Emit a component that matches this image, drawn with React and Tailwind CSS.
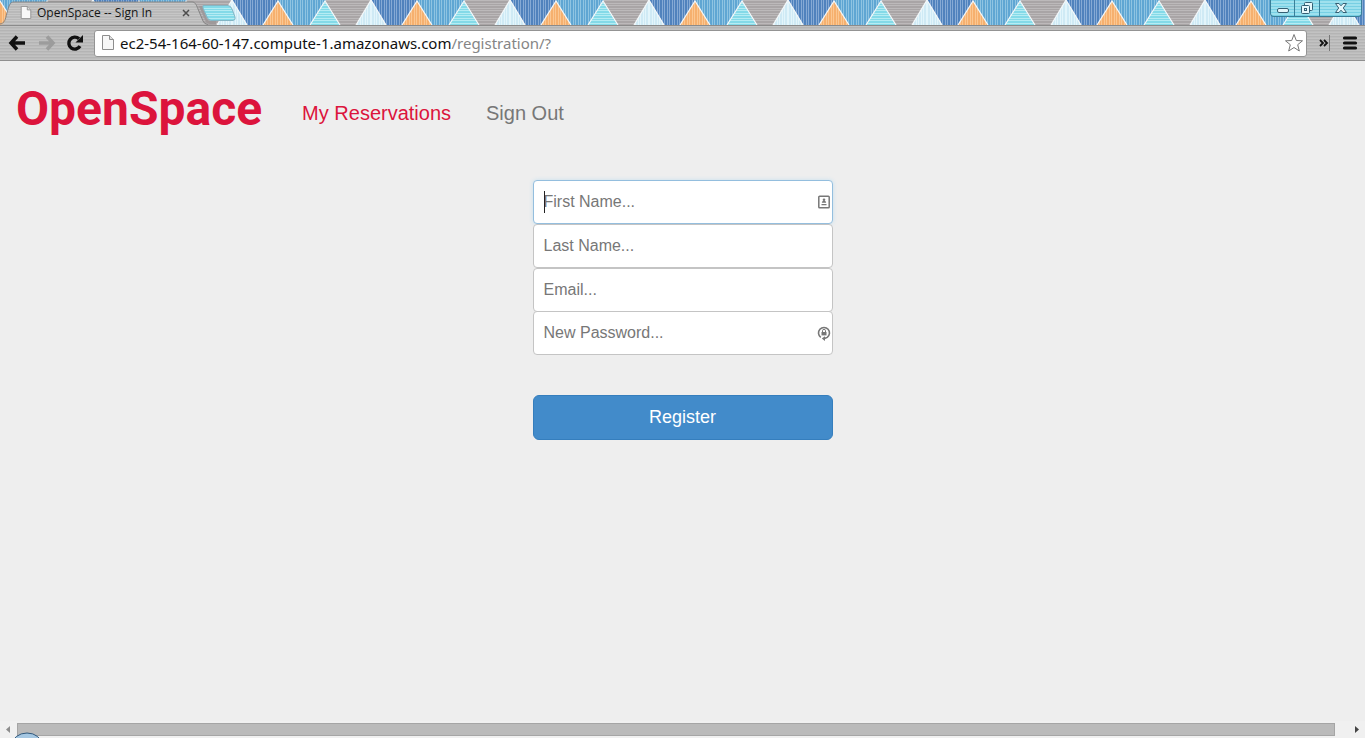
import React from "react";

const metal =
  "bg-[repeating-linear-gradient(to_bottom,#c2c2c2_0px,#c2c2c2_1px,#b4b4b4_1px,#b4b4b4_2px,#bcbcbc_2px,#bcbcbc_3px)]";

function Stripes({ id, base, line, horizontal }) {
  return (
    <pattern id={id} width="5" height="5" patternUnits="userSpaceOnUse">
      <rect width="5" height="5" fill={base} />
      {horizontal ? (
        <path d="M0 .5h5M0 3.5h5" stroke={line} />
      ) : (
        <path d="M.5 0v5M3.5 0v5" stroke={line} strokeWidth=".8" />
      )}
    </pattern>
  );
}

function Bunting() {
  return (
    <svg className="absolute inset-0 h-full w-full" aria-hidden="true">
      <defs>
        <Stripes id="s-navy" base="#5082bd" line="#94b4da" />
        <Stripes id="s-blue" base="#5fa6d3" line="#9ccbe6" />
        <Stripes id="s-orange" base="#f6b06e" line="#fccd9c" />
        <Stripes id="s-cyan" base="#84dae8" line="#b5ecf3" horizontal />
        <Stripes id="s-pale" base="#cfeaf5" line="#e9f7fc" />
        <Stripes id="s-grey" base="#a9a5a6" line="#bcb9ba" horizontal />
        <pattern id="flags" x="93" width="139" height="25" patternUnits="userSpaceOnUse">
          <rect width="139" height="25" fill="url(#s-grey)" />
          <path d="M0 0H47L32 25H15z" fill="url(#s-navy)" />
          <path d="M46 0H94L78 25H61z" fill="url(#s-blue)" />
          <path d="M46 1L31 25H61z" fill="url(#s-orange)" />
          <path d="M93 1L78 25H108z" fill="url(#s-cyan)" />
          <path d="M0 0L15 25H0zM139 0L124 25H139z" fill="url(#s-pale)" />
          <path
            d="M0 0L15 25M31 25L46 1L61 25M78 25L93 1L108 25M124 25L139 0"
            fill="none"
            stroke="#f4f8fa"
            strokeWidth="1.200"
          />
        </pattern>
      </defs>
      <rect width="100%" height="25" fill="url(#flags)" />
    </svg>
  );
}

function PageIcon({ className }) {
  return (
    <svg className={className} viewBox="0 0 12 15" aria-hidden="true">
      <path d="M.5.5h7l4 4v10H.5z" fill="#f7f7f7" stroke="#8d8d8d" />
      <path d="M7.5.5v4h4" fill="#ddd" stroke="#8d8d8d" />
    </svg>
  );
}

function TabStrip() {
  return (
    <div className="relative flex h-[25px] items-start justify-between">
      <Bunting />
      <div className="relative flex h-full items-center">
        <svg className="absolute inset-0 h-full w-[240px]" viewBox="0 0 240 25" aria-hidden="true">
          <defs>
            <Stripes id="s-tab" base="#b9b9b9" line="#c6c6c6" horizontal />
          </defs>
          <path d="M0 25C5 24 5 21 7 14C9 6 10 2 14 2H192C195 2 196 4 198 9L203 21Q204 24 208 25z" fill="url(#s-tab)" />
          <path d="M0 24C5 23 5 20 7 13C9 5 10 2 14 2H192C195 2 196 4 198 9L203 21Q204 24 208 24.500" fill="none" stroke="#858585" />
          <path d="M199 6L206 22Q207 24 210 24H216V21H211Q208 21 207 19L202 6z" fill="#9e999a" />
          <path d="M203 5.500H228Q231 6 232 9L235 17Q236 20 233 20.500H211Q208 20 207 17L203 8z" fill="url(#s-cyan)" stroke="#83b6c5" />
        </svg>
        <div className="relative flex w-[200px] items-center pr-2 pl-5">
          <PageIcon className="h-[13px] w-3" />
          <span className="ml-[5px] flex-1 font-['Open_Sans',sans-serif] text-[12px] leading-4 whitespace-nowrap text-[#151515]">
            OpenSpace -- Sign In
          </span>
          <button aria-label="Close tab" className="grid h-3 w-3 place-items-center">
            <svg className="h-2 w-2" viewBox="0 0 8 8" aria-hidden="true">
              <path d="M1 1l6 6M7 1L1 7" stroke="#4d4d4d" strokeWidth="1.500" />
            </svg>
          </button>
        </div>
      </div>
      <div className="relative mr-[3px] flex h-[17px] divide-x divide-[#397f99] rounded-b border border-t-0 border-[#397f99] bg-[repeating-linear-gradient(to_bottom,#77cfe3_0px,#77cfe3_1px,#9ee1ee_1px,#9ee1ee_3px)]">
        <button aria-label="Minimize" className="grid w-6 place-items-center">
          <svg className="h-4 w-4" viewBox="0 0 16 16" aria-hidden="true">
            <rect x="2.500" y="8.500" width="11" height="4" rx="1.500" fill="#e5f7fb" stroke="#345f73" />
          </svg>
        </button>
        <button aria-label="Restore" className="grid w-[25px] place-items-center">
          <svg className="h-4 w-4" viewBox="0 0 16 16" aria-hidden="true">
            <g fill="#e5f7fb" stroke="#345f73">
              <rect x="5.500" y="2.500" width="8" height="8" rx="1" />
              <rect x="2.500" y="5.500" width="8" height="8" rx="1" />
              <rect x="5.500" y="8.500" width="2" height="2" />
            </g>
          </svg>
        </button>
        <button aria-label="Close window" className="grid w-[41px] place-items-center">
          <svg className="h-4 w-4" viewBox="0 0 16 16" aria-hidden="true">
            <path
              d="M2.500 3.500h3.500L8 5.800L10 3.500h3.500L10.300 8l3.200 4.500H10L8 10.200L6 12.500H2.500L5.700 8z"
              fill="#e5f7fb"
              stroke="#345f73"
            />
          </svg>
        </button>
      </div>
    </div>
  );
}

function Toolbar() {
  return (
    <div className={`flex h-9 items-center border-t border-b border-t-[#8b8b8b] border-b-[#8f8f8f] pr-[7px] pl-2 ${metal}`}>
      <button aria-label="Back" className="h-5 w-5">
        <svg viewBox="0 0 20 20" aria-hidden="true">
          <path d="M9 3.500L3 10l6 6.500M3.500 10H17" fill="none" stroke="#111" strokeWidth="3.500" />
        </svg>
      </button>
      <button aria-label="Forward" className="ml-2 h-5 w-5">
        <svg viewBox="0 0 20 20" aria-hidden="true">
          <path d="M11 3.500L17 10l-6 6.500M16.500 10H3" fill="none" stroke="#9c9c9c" strokeWidth="3.500" />
        </svg>
      </button>
      <button aria-label="Reload" className="ml-2 h-5 w-5">
        <svg viewBox="0 0 20 20" aria-hidden="true">
          <path d="M16 13.200A6 6 0 1 1 15 5.800" fill="none" stroke="#111" strokeWidth="3.400" />
          <path d="M19 2V9.500H11.500z" fill="#111" />
        </svg>
      </button>
      <form className="ml-[10px] flex h-[27px] flex-1 items-center rounded-[3px] border border-[#949494] bg-white px-[7px] pb-px">
        <PageIcon className="h-[15px] w-3" />
        <label htmlFor="address" className="sr-only">Address</label>
        <div className="relative ml-[6px] h-6 flex-1 font-['Noto_Sans',sans-serif] text-[15px] leading-6">
          <input id="address" className="h-6 w-full bg-transparent text-transparent outline-none" />
          <span className="pointer-events-none absolute inset-0 flex whitespace-nowrap">
            <span className="text-[#111]">ec2-54-164-60-147.compute-1.amazonaws.com</span>
            <span className="text-[#858585]">/registration/?</span>
          </span>
        </div>
        <button type="button" aria-label="Bookmark this page" className="-mr-[5px] h-5 w-5">
          <svg viewBox="0 0 20 20" aria-hidden="true">
            <path
              d="M10 1.500L12.300 7.500L18.500 7.800L13.700 11.700L15.300 18L10 14.500L4.700 18L6.300 11.700L1.500 7.800L7.700 7.500z"
              fill="#fff"
              stroke="#777"
              strokeLinejoin="round"
            />
          </svg>
        </button>
      </form>
      <button aria-label="More extensions" className="ml-3 h-4 w-[10px]">
        <svg viewBox="0 0 10 16" aria-hidden="true">
          <path d="M1 5l3 3-3 3M5 5l3 3-3 3" fill="none" stroke="#111" strokeWidth="1.800" />
        </svg>
      </button>
      <span className="h-4 w-px bg-[#777]" />
      <button aria-label="Menu" className="ml-3 h-4 w-4">
        <svg viewBox="0 0 16 16" aria-hidden="true">
          <path d="M2.500 3h11M2.500 8h11M2.500 13h11" stroke="#111" strokeWidth="3.200" strokeLinecap="round" />
        </svg>
      </button>
    </div>
  );
}

function ContactIcon() {
  return (
    <svg className="h-[14px] w-[14px]" viewBox="0 0 14 14" aria-hidden="true">
      <rect x="1.800" y="1.300" width="10.400" height="11.400" rx=".8" fill="#fff" stroke="#777" strokeWidth="1.500" />
      <circle cx="7" cy="4.800" r="1.300" fill="#777" />
      <path d="M4.800 7.800Q4.800 5.800 7 5.800T9.200 7.800zM4.500 9h5v1.200h-5z" fill="#777" />
    </svg>
  );
}

function LockIcon() {
  return (
    <svg className="h-[14px] w-[14px] overflow-visible" viewBox="0 0 14 14" aria-hidden="true">
      <path d="M3.800 11.400A5.500 5.500 0 1 1 10.200 11.400L7.500 12.600" fill="none" stroke="#777" strokeWidth="1.600" />
      <path d="M8 10.300V15L4.800 12.600z" fill="#777" />
      <rect x="4.500" y="6" width="5" height="3.400" fill="#777" />
      <path d="M5.500 6V4.800a1.500 1.500 0 0 1 3 0V6" fill="none" stroke="#777" />
    </svg>
  );
}

function Field({ id, label, type = "text", icon, active }) {
  return (
    <div className="relative">
      <label htmlFor={id} className="sr-only">{label}</label>
      <input
        id={id}
        type={type}
        placeholder={`${label}...`}
        className={`block h-11 w-full rounded border bg-white px-[10px] text-[16px] leading-5 outline-none placeholder:text-[#777] ${
          active ? "border-[#94bede] shadow-[0_0_4px_#c5dfef]" : "border-[#c4c4c4]"
        }`}
      />
      {active && <span className="absolute top-[11px] left-[11px] h-[22px] w-px bg-[#222]" />}
      {icon && <span className="absolute top-[15px] right-[2px]">{icon}</span>}
    </div>
  );
}

function ScrollBar() {
  return (
    <div className="relative flex h-[17px] items-center overflow-hidden bg-[#f0f0f0]" aria-hidden="true">
      <svg className="h-[17px] w-[17px]" viewBox="0 0 17 17">
        <path d="M10 5v7L6 8.500z" fill="#8d8d8d" />
      </svg>
      <div className="h-[13px] flex-1 border border-[#a5a5a5] bg-[#bababa]" />
      <svg className="ml-[13px] h-[17px] w-[17px]" viewBox="0 0 17 17">
        <path d="M7 5v7l4-3.500z" fill="#444" />
      </svg>
      <svg className="absolute bottom-0 left-3 h-[6px] w-[30px]" viewBox="0 0 30 6">
        <ellipse cx="15" cy="13" rx="15" ry="12" fill="#a5c7e2" stroke="#2f587c" />
      </svg>
    </div>
  );
}

export default function App() {
  return (
    <div className="flex min-h-screen flex-col bg-[#eee] font-['Liberation_Sans',Arial,sans-serif]">
      <header>
        <TabStrip />
        <Toolbar />
      </header>
      <main className="flex-1">
        <nav className="flex items-center pt-5 pl-4 text-[20px] leading-7">
          <a href="#home" className="font-[Roboto,sans-serif] text-[48px] leading-[56px] font-bold text-[#dc143c]">
            OpenSpace
          </a>
          <div className="ml-10 flex gap-[35px] pt-2">
            <a href="#reservations" className="text-[#dc143c]">My Reservations</a>
            <a href="#signout" className="text-[#777]">Sign Out</a>
          </div>
        </nav>
        <form className="mx-auto mt-[43px] w-[300px]">
          <Field id="first" label="First Name" active icon={<ContactIcon />} />
          <Field id="last" label="Last Name" />
          <Field id="email" label="Email" type="email" />
          <div className="-mt-px">
            <Field id="password" label="New Password" type="password" icon={<LockIcon />} />
          </div>
          <button
            type="button"
            className="mt-10 h-[45px] w-full rounded-md border border-[#357ebd] bg-[#428bca] pb-px text-[18px] leading-6 text-white"
          >
            Register
          </button>
        </form>
      </main>
      <ScrollBar />
    </div>
  );
}
